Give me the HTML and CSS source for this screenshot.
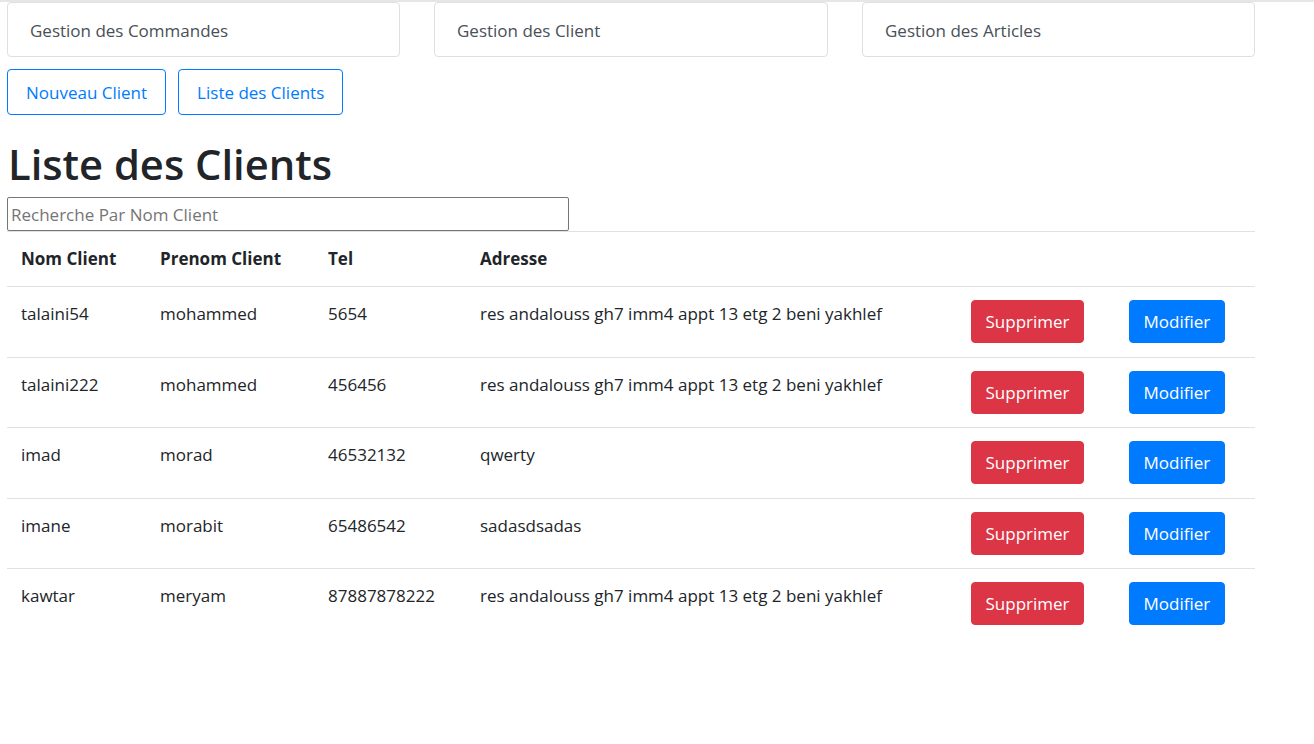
FILE: index.html
```html
<!DOCTYPE html>
<html lang="fr">
<head>
<meta charset="utf-8">
<title>Liste des Clients</title>
<link rel="stylesheet" href="styles.css">
</head>
<body>
<div class="page">
  <nav class="modules">
    <a class="module-card">Gestion des Commandes</a>
    <a class="module-card">Gestion des Client</a>
    <a class="module-card">Gestion des Articles</a>
  </nav>
  <div class="actions">
    <a class="btn btn-outline">Nouveau Client</a>
    <a class="btn btn-outline">Liste des Clients</a>
  </div>
  <h1 class="title">Liste des Clients</h1>
  <input class="search" type="text" placeholder="Recherche Par Nom Client">
  <table class="clients">
    <colgroup>
      <col class="c-nom"><col class="c-prenom"><col class="c-tel"><col class="c-adr"><col class="c-sup"><col class="c-mod">
    </colgroup>
    <thead>
      <tr><th>Nom Client</th><th>Prenom Client</th><th>Tel</th><th>Adresse</th><th></th><th></th></tr>
    </thead>
    <tbody>
      <tr><td>talaini54</td><td>mohammed</td><td>5654</td><td>res andalouss gh7 imm4 appt 13 etg 2 beni yakhlef</td><td><button class="btn btn-danger">Supprimer</button></td><td><button class="btn btn-primary">Modifier</button></td></tr>
      <tr><td>talaini222</td><td>mohammed</td><td>456456</td><td>res andalouss gh7 imm4 appt 13 etg 2 beni yakhlef</td><td><button class="btn btn-danger">Supprimer</button></td><td><button class="btn btn-primary">Modifier</button></td></tr>
      <tr><td>imad</td><td>morad</td><td>46532132</td><td>qwerty</td><td><button class="btn btn-danger">Supprimer</button></td><td><button class="btn btn-primary">Modifier</button></td></tr>
      <tr><td>imane</td><td>morabit</td><td>65486542</td><td>sadasdsadas</td><td><button class="btn btn-danger">Supprimer</button></td><td><button class="btn btn-primary">Modifier</button></td></tr>
      <tr><td>kawtar</td><td>meryam</td><td>87887878222</td><td>res andalouss gh7 imm4 appt 13 etg 2 beni yakhlef</td><td><button class="btn btn-danger">Supprimer</button></td><td><button class="btn btn-primary">Modifier</button></td></tr>
    </tbody>
  </table>
</div>
</body>
</html>
```
FILE: styles.css
```css
* { box-sizing: border-box; }
html, body { margin: 0; padding: 0; background: #fff; }
body {
  font-family: "Open Sans", "Noto Sans", sans-serif;
  font-size: 17px;
  line-height: 27px;
  color: #212529;
  border-top: 2px solid #e6e6e6;
}
.page { padding: 0 7px; width: 1262px; }

.modules {
  display: grid;
  grid-template-columns: 393px 394px 393px;
  column-gap: 34px;
}
.module-card {
  display: flex;
  align-items: center;
  height: 55px;
  padding: 2px 22px 0;
  border: 1px solid #dfdfdf;
  border-radius: 4px;
  color: #495057;
  text-decoration: none;
}

.actions {
  display: flex;
  gap: 12px;
  margin-top: 12px;
}
.btn {
  display: inline-block;
  font-family: inherit;
  font-size: 17px;
  line-height: 27px;
  border: 1px solid transparent;
  border-radius: 4px;
  text-decoration: none;
  cursor: pointer;
}
.btn-outline {
  padding: 8.5px 18px 8.5px;
  color: #007bff;
  border-color: #007bff;
}
.btn-danger {
  padding: 7px 13.5px;
  background: #dc3545;
  border-color: #dc3545;
  color: #fff;
}
.btn-primary {
  padding: 7px 13.5px;
  background: #007bff;
  border-color: #007bff;
  color: #fff;
}

.title {
  margin: 22px 0 6px 1px;
  font-size: 41.7px;
  line-height: 54px;
  font-weight: 600;
  color: #212529;
}

.search {
  display: block;
  width: 562px;
  height: 34px;
  margin: 0;
  padding: 0 3px;
  font-family: inherit;
  font-size: 17px;
  color: #212529;
  border: 1px solid #767676;
  border-radius: 2px;
}
.search::placeholder { color: #757575; }

.clients {
  width: 1248px;
  border-collapse: collapse;
  table-layout: fixed;
}
.c-nom { width: 139px; }
.c-prenom { width: 168px; }
.c-tel { width: 152px; }
.c-adr { width: 491px; }
.c-sup { width: 158px; }
.c-mod { width: 140px; }
.clients th, .clients td {
  padding: 13.25px 14px;
  border-top: 1px solid #dee2e6;
  text-align: left;
  vertical-align: top;
  white-space: nowrap;
}
.clients th {
  font-weight: 700;
  padding-top: 13px;
  padding-bottom: 14px;
}
```
